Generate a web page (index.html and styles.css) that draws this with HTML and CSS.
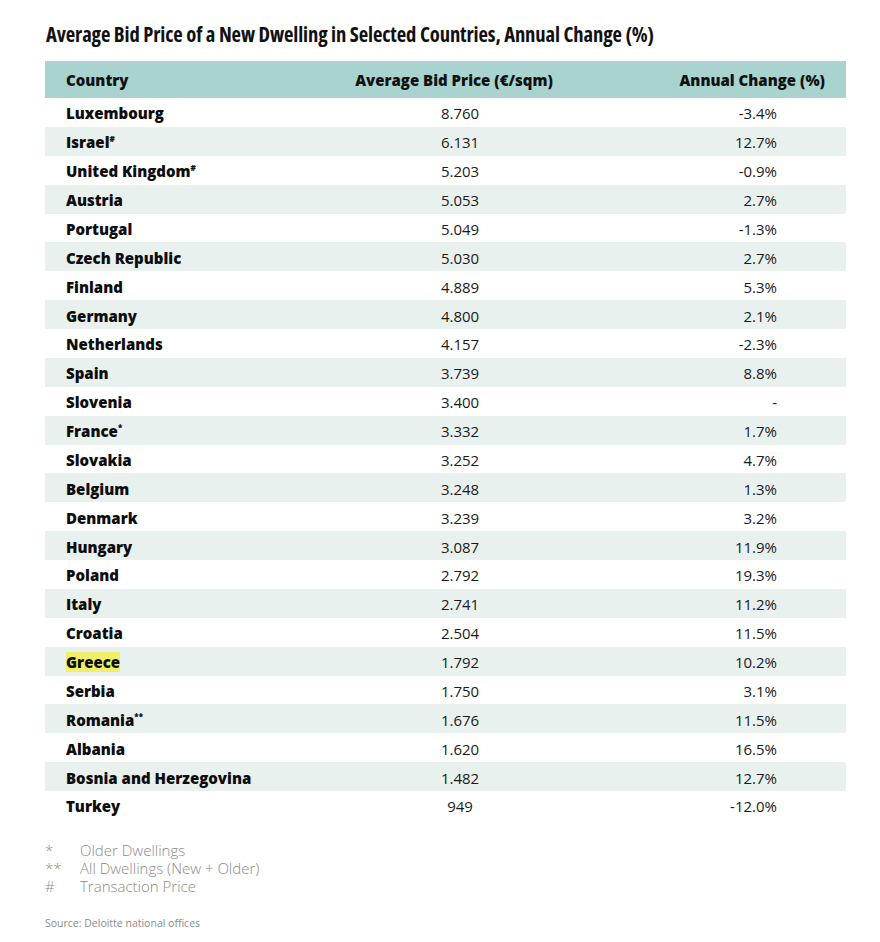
FILE: index.html
```html
<!DOCTYPE html>
<html>
<head>
<meta charset="utf-8">
<link rel="stylesheet" href="styles.css">
</head>
<body>
<div class="page">
  <h1 class="title">Average Bid Price of a New Dwelling in Selected Countries, Annual Change (%)</h1>
  <table class="data">
    <thead>
      <tr><th class="c-country">Country</th><th class="c-price">Average Bid Price (€/sqm)</th><th class="c-change">Annual Change (%)</th></tr>
    </thead>
    <tbody>
      <tr><td class="c-country">Luxembourg</td><td class="c-price">8.760</td><td class="c-change">-3.4%</td></tr>
      <tr><td class="c-country">Israel<sup>#</sup></td><td class="c-price">6.131</td><td class="c-change">12.7%</td></tr>
      <tr><td class="c-country">United Kingdom<sup>#</sup></td><td class="c-price">5.203</td><td class="c-change">-0.9%</td></tr>
      <tr><td class="c-country">Austria</td><td class="c-price">5.053</td><td class="c-change">2.7%</td></tr>
      <tr><td class="c-country">Portugal</td><td class="c-price">5.049</td><td class="c-change">-1.3%</td></tr>
      <tr><td class="c-country">Czech Republic</td><td class="c-price">5.030</td><td class="c-change">2.7%</td></tr>
      <tr><td class="c-country">Finland</td><td class="c-price">4.889</td><td class="c-change">5.3%</td></tr>
      <tr><td class="c-country">Germany</td><td class="c-price">4.800</td><td class="c-change">2.1%</td></tr>
      <tr><td class="c-country">Netherlands</td><td class="c-price">4.157</td><td class="c-change">-2.3%</td></tr>
      <tr><td class="c-country">Spain</td><td class="c-price">3.739</td><td class="c-change">8.8%</td></tr>
      <tr><td class="c-country">Slovenia</td><td class="c-price">3.400</td><td class="c-change">-</td></tr>
      <tr><td class="c-country">France<sup>*</sup></td><td class="c-price">3.332</td><td class="c-change">1.7%</td></tr>
      <tr><td class="c-country">Slovakia</td><td class="c-price">3.252</td><td class="c-change">4.7%</td></tr>
      <tr><td class="c-country">Belgium</td><td class="c-price">3.248</td><td class="c-change">1.3%</td></tr>
      <tr><td class="c-country">Denmark</td><td class="c-price">3.239</td><td class="c-change">3.2%</td></tr>
      <tr><td class="c-country">Hungary</td><td class="c-price">3.087</td><td class="c-change">11.9%</td></tr>
      <tr><td class="c-country">Poland</td><td class="c-price">2.792</td><td class="c-change">19.3%</td></tr>
      <tr><td class="c-country">Italy</td><td class="c-price">2.741</td><td class="c-change">11.2%</td></tr>
      <tr><td class="c-country">Croatia</td><td class="c-price">2.504</td><td class="c-change">11.5%</td></tr>
      <tr><td class="c-country"><span class="hl">Greece</span></td><td class="c-price">1.792</td><td class="c-change">10.2%</td></tr>
      <tr><td class="c-country">Serbia</td><td class="c-price">1.750</td><td class="c-change">3.1%</td></tr>
      <tr><td class="c-country">Romania<sup>**</sup></td><td class="c-price">1.676</td><td class="c-change">11.5%</td></tr>
      <tr><td class="c-country">Albania</td><td class="c-price">1.620</td><td class="c-change">16.5%</td></tr>
      <tr><td class="c-country">Bosnia and Herzegovina</td><td class="c-price">1.482</td><td class="c-change">12.7%</td></tr>
      <tr><td class="c-country">Turkey</td><td class="c-price">949</td><td class="c-change">-12.0%</td></tr>
    </tbody>
  </table>
  <div class="notes">
    <div class="note"><span class="mark">*</span><span>Older Dwellings</span></div>
    <div class="note"><span class="mark">**</span><span>All Dwellings (New + Older)</span></div>
    <div class="note"><span class="mark">#</span><span>Transaction Price</span></div>
  </div>
  <p class="source">Source: Deloitte national offices</p>
</div>
</body>
</html>
```

FILE: styles.css
```css
html, body {
  margin: 0;
  padding: 0;
  background: #ffffff;
}
body {
  font-family: "Open Sans", "Noto Sans", sans-serif;
  color: #111;
}
.page {
  padding: 23px 34px 0 45px;
}
.title {
  margin: 0 0 16px 1px;
  font-size: 20.6px;
  font-weight: 700;
  font-stretch: 75%;
  line-height: 22px;
  color: #111;
  letter-spacing: -0.1px;
}
.data {
  width: 801px;
  border-collapse: collapse;
  table-layout: fixed;
}
.data th,
.data td {
  box-sizing: border-box;
  padding: 0;
}
.data th {
  height: 37px;
  background: #a9d3ce;
  font-size: 15px;
  font-weight: 800;
  color: #111;
}
.data td {
  height: 28.88px;
  padding-top: 2px;
  font-size: 15px;
  line-height: 20px;
  color: #1a1a1a;
}
.data tbody tr:nth-child(even) td {
  background: #e9f1ef;
}
.c-country {
  text-align: left;
  padding-left: 21px !important;
  width: 281px;
}
td.c-country {
  font-weight: 800;
  color: #0d0d0d;
}
.c-price {
  text-align: center;
  width: 268px;
}
th.c-price {
  padding-right: 12px !important;
}
.c-change {
  text-align: right;
  padding-right: 69px !important;
}
th.c-change {
  padding-right: 21px !important;
}
sup {
  font-size: 8px;
  vertical-align: top;
  line-height: 14px;
}
.hl {
  background: #eef06a;
}
.notes {
  margin-top: 21px;
  color: #8a8a8a;
  font-size: 15px;
  font-weight: 300;
  line-height: 18px;
}
.note {
  display: flex;
}
.mark {
  width: 35px;
}
.source {
  margin: 21px 0 0;
  font-size: 10.5px;
  color: #8a8a8a;
  font-weight: 400;
}
```
